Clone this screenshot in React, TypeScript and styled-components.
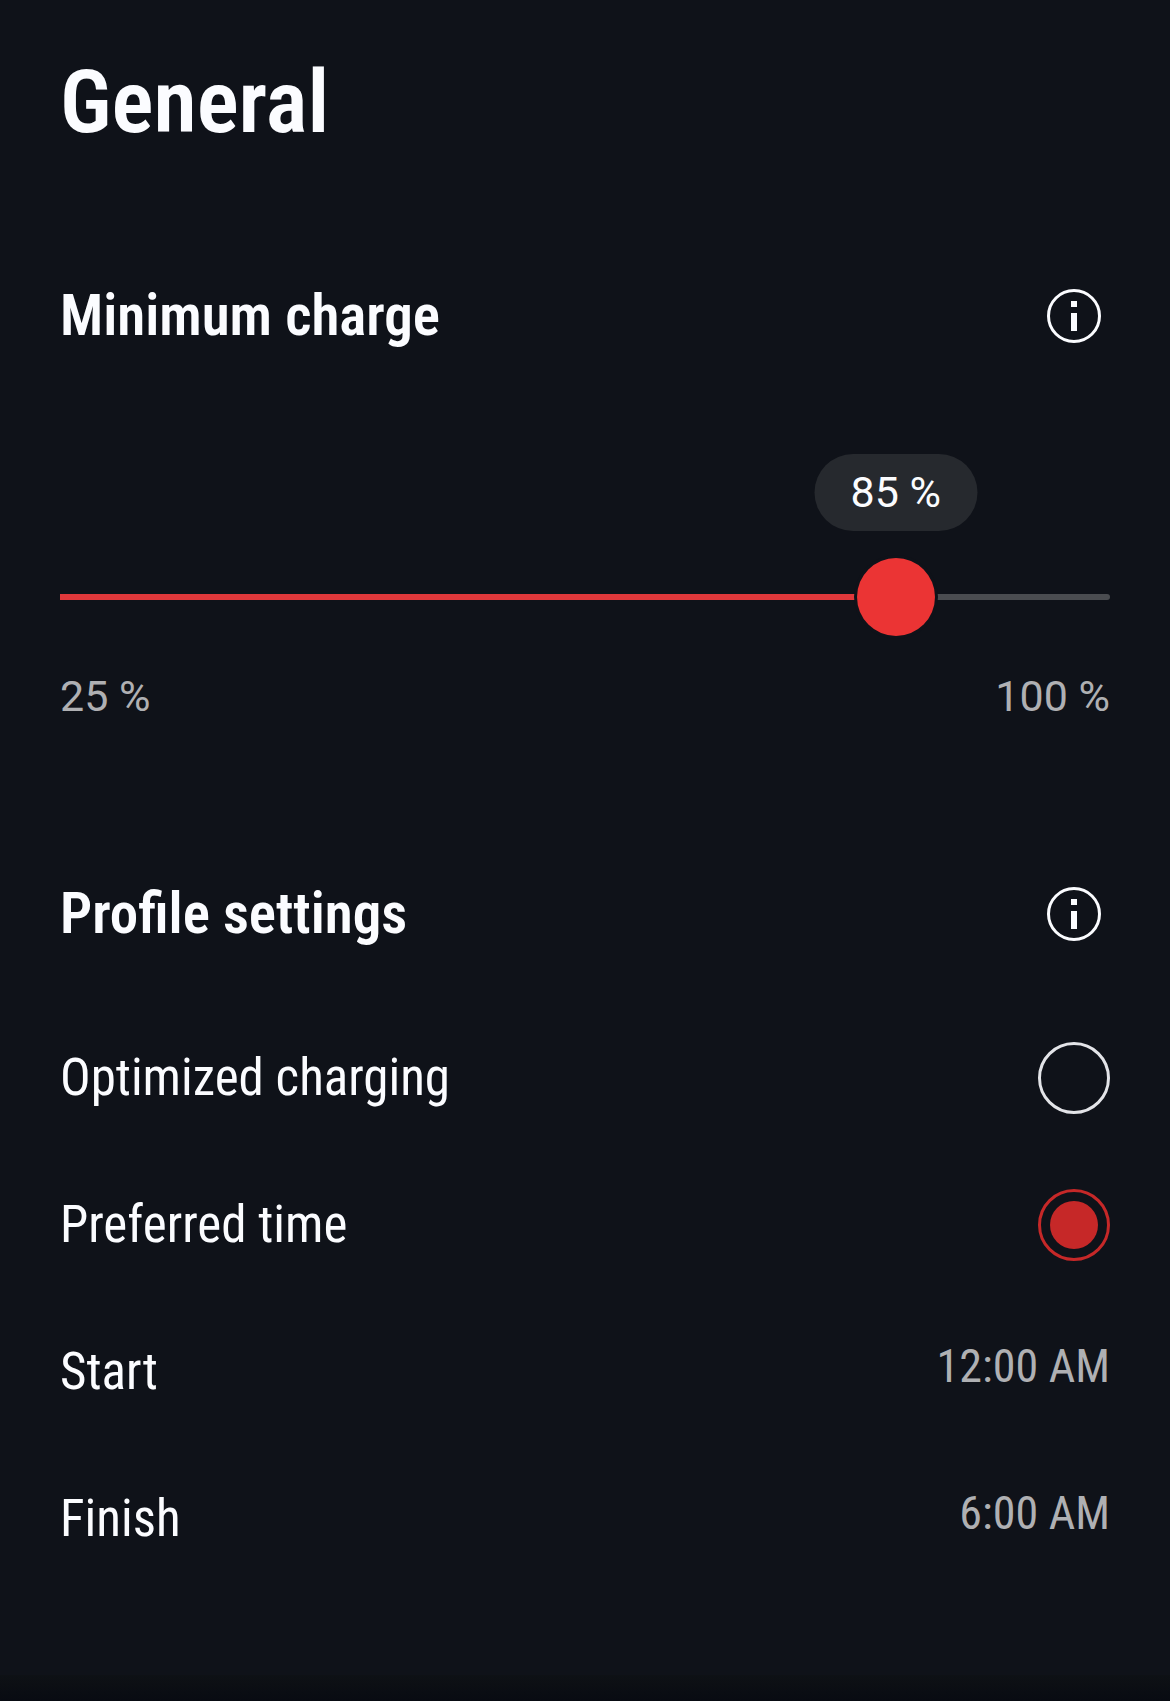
import React, { useState } from "react";
import styled, { createGlobalStyle } from "styled-components";

const color = {
  page: "#0f1219",
  text: "#fbfcff",
  muted: "#afb0b3",
  bubble: "#26292e",
  rail: "#4a4c50",
  fill: "#e0383b",
  thumb: "#eb3434",
  radio: "#c62828",
  radioIdle: "#e3e4e8",
};

const font = {
  label: `"Roboto Condensed", Roboto, "Liberation Sans", sans-serif`,
  number: `Roboto, "Liberation Sans", sans-serif`,
};

const GlobalStyle = createGlobalStyle`
  *, *::before, *::after { box-sizing: border-box; }
  body {
    margin: 0;
    background: ${color.page};
    color: ${color.text};
    font-family: ${font.label};
  }
`;

const Page = styled.main`
  display: flex;
  flex-direction: column;
  min-height: 100vh;
`;

const Content = styled.div`
  display: flex;
  flex-direction: column;
  padding: 52px 60px 0;
`;

const Title = styled.h1`
  margin: 0;
  font-size: 88px;
  line-height: 100px;
  font-weight: 600;
`;

const Section = styled.section<{ $gap: number }>`
  display: flex;
  flex-direction: column;
  margin-top: ${(p) => p.$gap}px;
`;

const SectionHeader = styled.header`
  display: flex;
  align-items: center;
  justify-content: space-between;
  height: 72px;
`;

const SectionTitle = styled.h2`
  margin: 0;
  font-size: 57px;
  line-height: 72px;
  font-weight: 600;
`;

const IconButton = styled.button`
  display: grid;
  place-items: center;
  width: 72px;
  height: 72px;
  padding: 0;
  border: 0;
  background: none;
  color: inherit;
  cursor: pointer;
`;

const SliderArea = styled.div`
  position: relative;
  display: grid;
  align-items: center;
  margin-top: 102px;
  padding-top: 104px;
`;

const Rail = styled.div`
  grid-area: 2 / 1;
  display: flex;
  height: 6px;
`;

const RailFill = styled.span`
  background: ${color.fill};
`;

const RailRest = styled.span`
  flex: 1;
  border-radius: 0 4px 4px 0;
  background: ${color.rail};
`;

const Range = styled.input`
  grid-area: 2 / 1;
  appearance: none;
  height: 78px;
  margin: 0 -39px;
  background: none;
  cursor: pointer;

  &::-webkit-slider-thumb {
    appearance: none;
    width: 78px;
    height: 78px;
    border: 0;
    border-radius: 50%;
    background: ${color.thumb};
    box-shadow: 0 0 0 3px ${color.page};
  }
`;

const Bubble = styled.output`
  position: absolute;
  top: 0;
  transform: translateX(-50%);
  width: 163px;
  border-radius: 39px;
  background: ${color.bubble};
  font-family: ${font.number};
  font-size: 43px;
  line-height: 77px;
  text-align: center;
`;

const Limits = styled.div`
  display: flex;
  justify-content: space-between;
  margin-top: 36px;
  color: ${color.muted};
  font-family: ${font.number};
  font-size: 43px;
  line-height: 48px;
`;

const Rows = styled.div`
  display: flex;
  flex-direction: column;
  margin-top: 54px;
`;

const Row = styled.label`
  display: flex;
  align-items: center;
  justify-content: space-between;
  height: 147px;
  font-size: 51px;
  line-height: 60px;
  cursor: pointer;
`;

const Radio = styled.input`
  appearance: none;
  display: grid;
  place-items: center;
  width: 72px;
  height: 72px;
  margin: 0;
  border: 3px solid ${color.radioIdle};
  border-radius: 50%;
  cursor: pointer;

  &:checked {
    border-color: ${color.radio};
  }

  &:checked::before {
    content: "";
    width: 48px;
    height: 48px;
    border-radius: 50%;
    background: ${color.radio};
  }
`;

const TimeButton = styled.button`
  align-self: flex-start;
  margin-top: 44px;
  padding: 0;
  border: 0;
  background: none;
  color: ${color.muted};
  font-family: inherit;
  font-size: 46px;
  line-height: 48px;
  cursor: pointer;
`;

const BottomFade = styled.div`
  height: 26px;
  margin-top: auto;
  background: linear-gradient(#0e1115, #080b12);
`;

function InfoButton({ label }: { label: string }) {
  return (
    <IconButton type="button" aria-label={label}>
      <svg width="54" height="54" viewBox="0 0 54 54" fill="none" aria-hidden="true">
        <circle cx="27" cy="27" r="25.5" stroke="currentColor" strokeWidth="3" />
        <rect x="24" y="12" width="6" height="6" fill="currentColor" />
        <rect x="24" y="24" width="6" height="18" fill="currentColor" />
      </svg>
    </IconButton>
  );
}

const MIN = 25;
const MAX = 100;

function ChargeSlider() {
  const [charge, setCharge] = useState(84.7);
  const percent = `${((charge - MIN) / (MAX - MIN)) * 100}%`;
  return (
    <>
      <SliderArea>
        <Bubble htmlFor="charge" style={{ left: percent }}>
          {Math.round(charge)} %
        </Bubble>
        <Rail>
          <RailFill style={{ width: percent }} />
          <RailRest />
        </Rail>
        <Range
          id="charge"
          type="range"
          aria-labelledby="charge-title"
          min={MIN}
          max={MAX}
          step={0.1}
          value={charge}
          onChange={(e) => setCharge(Number(e.target.value))}
        />
      </SliderArea>
      <Limits>
        <span>{MIN} %</span>
        <span>{MAX} %</span>
      </Limits>
    </>
  );
}

const modes = ["Optimized charging", "Preferred time"];
const times = [
  { label: "Start", value: "12:00 AM" },
  { label: "Finish", value: "6:00 AM" },
];

export default function App() {
  const [mode, setMode] = useState("Preferred time");
  return (
    <Page>
      <GlobalStyle />
      <Content>
        <Title>General</Title>
        <Section $gap={128}>
          <SectionHeader>
            <SectionTitle id="charge-title">Minimum charge</SectionTitle>
            <InfoButton label="About minimum charge" />
          </SectionHeader>
          <ChargeSlider />
        </Section>
        <Section $gap={158}>
          <SectionHeader>
            <SectionTitle>Profile settings</SectionTitle>
            <InfoButton label="About profile settings" />
          </SectionHeader>
          <Rows>
            {modes.map((name) => (
              <Row key={name}>
                {name}
                <Radio
                  type="radio"
                  name="mode"
                  checked={mode === name}
                  onChange={() => setMode(name)}
                />
              </Row>
            ))}
            {times.map(({ label, value }) => (
              <Row key={label}>
                {label}
                <TimeButton type="button">{value}</TimeButton>
              </Row>
            ))}
          </Rows>
        </Section>
      </Content>
      <BottomFade />
    </Page>
  );
}
